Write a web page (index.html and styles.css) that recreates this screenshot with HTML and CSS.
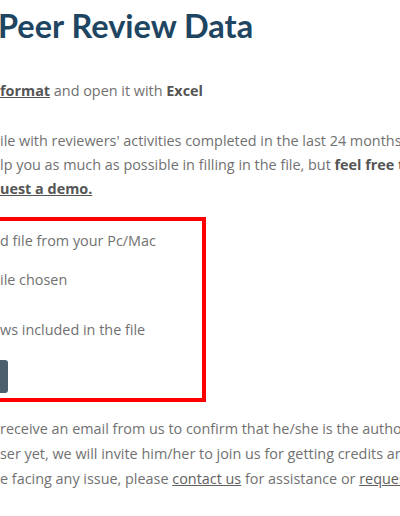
FILE: index.html
```html
<!DOCTYPE html>
<html lang="en">
<head>
    <meta charset="UTF-8">
    <meta name="viewport" content="width=device-width, initial-scale=1.0">
    <title>Peer Review Data</title>
    <link rel="stylesheet" href="styles.css">
</head>
<body>
    <div class="page">
        <h1 class="title">Peer Review Data</h1>
        <p class="lead"><a class="strongLink" href="#">format</a> and open it with <b>Excel</b></p>
        <div class="intro">
            <p class="line">ile with reviewers' activities completed in the last 24 months, one row</p>
            <p class="line">lp you as much as possible in filling in the file, but <b>feel free to</b></p>
            <p class="line"><a class="strongLink" href="#">uest a demo.</a></p>
        </div>
        <div class="uploadBox">
            <p class="line boxFirst">d file from your Pc/Mac</p>
            <p class="line boxFile">ile chosen</p>
            <p class="line boxRows">ws included in the file</p>
            <button class="uploadBtn" type="button"></button>
        </div>
        <div class="notes">
            <p class="line">receive an email from us to confirm that he/she is the author</p>
            <p class="line">ser yet, we will invite him/her to join us for getting credits and</p>
            <p class="line">e facing any issue, please <a href="#">contact us</a> for assistance or <a href="#">request a demo.</a></p>
        </div>
    </div>
</body>
</html>
```

FILE: styles.css
```css
body {
    margin: 0;
    width: 400px;
    height: 516px;
    overflow: hidden;
    background: #fff;
    font-family: 'Open Sans', sans-serif;
    font-size: 14.4px;
    color: #717171;
}
.page {
    width: 400px;
    overflow: hidden;
}
p {
    margin: 0;
}
a {
    color: #5f5f5f;
}
b {
    color: #555;
}
.line {
    white-space: nowrap;
}
.title {
    margin: 0 0 0 -2px;
    padding-top: 6px;
    font-family: 'Lato', sans-serif;
    font-weight: 700;
    font-size: 32.5px;
    line-height: 40px;
    color: #1e4561;
    white-space: nowrap;
}
.lead {
    margin-top: 33px;
    line-height: 24px;
    white-space: nowrap;
}
.strongLink {
    font-weight: 700;
    color: #555;
}
.intro {
    margin-top: 26px;
    line-height: 24px;
}
.uploadBox {
    margin-top: 16px;
    width: 206px;
    height: 185px;
    box-sizing: border-box;
    border: 4px solid #ff0000;
    border-left: 0;
    line-height: 24px;
}
.boxFirst {
    margin-top: 8px;
}
.boxFile {
    margin-top: 15px;
}
.boxRows {
    margin-top: 26px;
}
.uploadBtn {
    display: block;
    margin-top: 18px;
    width: 8px;
    height: 33px;
    border: 0;
    padding: 0;
    background: #4c5f6d;
    border-radius: 0 3px 3px 0;
}
.notes {
    margin-top: 14px;
    line-height: 25px;
}
```
